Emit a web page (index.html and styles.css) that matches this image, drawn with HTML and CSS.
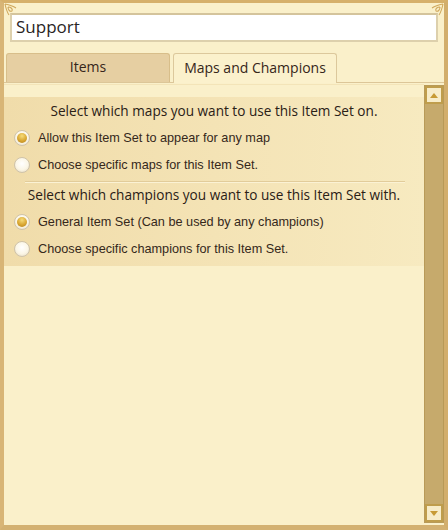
FILE: index.html
```html
<!DOCTYPE html>
<html>
<head>
<meta charset="utf-8">
<link rel="stylesheet" href="styles.css">
</head>
<body>
<div class="frame">
  <svg class="corner corner-tl" width="20" height="20" viewBox="0 0 20 20"><path d="M1 1 C6 2 9 3 12 5 M1 1 C2 6 3 9 5 12 M4 4 C7 4 9 6 8 8 M8 8 C6 9 4 7 4 4" fill="none" stroke="#d0a85c" stroke-width="1.1"/></svg>
  <svg class="corner corner-tr" width="20" height="20" viewBox="0 0 20 20"><path d="M19 1 C14 2 11 3 8 5 M19 1 C18 6 17 9 15 12 M16 4 C13 4 11 6 12 8 M12 8 C14 9 16 7 16 4" fill="none" stroke="#d0a85c" stroke-width="1.1"/></svg>
  <div class="search"><span class="search-text">Support</span></div>
  <div class="tabs">
    <div class="tab">Items</div>
    <div class="tab tab-active">Maps and Champions</div>
  </div>
  <div class="panel">
    <div class="content">
      <div class="band">
        <div class="heading">Select which maps you want to use this Item Set on.</div>
        <div class="option"><span class="radio radio-on"></span><span>Allow this Item Set to appear for any map</span></div>
        <div class="option"><span class="radio"></span><span>Choose specific maps for this Item Set.</span></div>
        <div class="sep"></div>
        <div class="heading">Select which champions you want to use this Item Set with.</div>
        <div class="option"><span class="radio radio-on"></span><span>General Item Set (Can be used by any champions)</span></div>
        <div class="option"><span class="radio"></span><span>Choose specific champions for this Item Set.</span></div>
      </div>
    </div>
    <div class="scrollbar">
      <div class="sb-btn"><svg width="8" height="5" viewBox="0 0 8 5"><path d="M4 0 L8 5 L0 5 Z" fill="#c79a34"/></svg></div>
      <div class="sb-track"></div>
      <div class="sb-btn"><svg width="8" height="5" viewBox="0 0 8 5"><path d="M0 0 L8 0 L4 5 Z" fill="#c79a34"/></svg></div>
    </div>
  </div>
</div>
</body>
</html>
```

FILE: styles.css
```css
* { box-sizing: border-box; }
html, body { margin: 0; padding: 0; }
body { width: 448px; height: 530px; overflow: hidden; background: #f9efc9; }

.frame {
  position: relative;
  width: 448px;
  height: 530px;
  background: #faf0ca;
  border-top: 3px solid #d6b06a;
  border-left: 4px solid #d8b576;
  border-right: 4px solid #d2ae6c;
  border-bottom: 5px solid #d3b171;
  display: flex;
  flex-direction: column;
}

.corner { position: absolute; top: 0; }
.corner-tl { left: 0; }
.corner-tr { right: 0; }

.search {
  margin: 10px 6px 0 6px;
  height: 29px;
  background: #ffffff;
  border: 2px solid #ddd0ac;
  border-top-color: #d4c49c;
  display: flex;
  align-items: center;
  padding-left: 4px;
  padding-bottom: 3px;
}
.search-text {
  font-family: "Open Sans", sans-serif;
  font-size: 17px;
  color: #2a251f;
  line-height: 1;
}

.tabs {
  margin-top: 11px;
  padding-left: 2px;
  display: flex;
  gap: 3px;
  align-items: flex-end;
  border-bottom: 1px solid #dcc698;
}
.tab {
  width: 164px;
  height: 29px;
  background: #e6cfa2;
  border: 1px solid #d8be8a;
  border-bottom: none;
  border-radius: 3px 3px 0 0;
  font-family: "Open Sans", sans-serif;
  font-size: 14px;
  color: #36261a;
  display: flex;
  align-items: center;
  justify-content: center;
  padding-bottom: 3px;
}
.tab-active {
  background: #fbf1cc;
  height: 30px;
  margin-bottom: -1px;
  border-color: #dcc89c;
}

.panel {
  flex: 1;
  display: flex;
  padding-top: 1px;
}
.content {
  flex: 1;
  padding-top: 12px;
  background: #faf0ca;
  border-top: 1px solid #f3e4b8;
}
.band {
  height: 169px;
  background: linear-gradient(90deg, #f0dcaa 0%, #f4e3b5 50%, #f7eac0 100%);
  padding-top: 4px;
}
.heading {
  font-family: "Open Sans", sans-serif;
  font-size: 13.6px;
  color: #2a2016;
  text-align: center;
  height: 20px;
  line-height: 20px;
}
.option {
  display: flex;
  align-items: center;
  height: 27px;
  padding-left: 10px;
  font-family: "Liberation Sans", Arial, sans-serif;
  font-size: 12.7px;
  color: #35281b;
}
.heading + .option { margin-top: 3px; }
.radio {
  width: 16px;
  height: 16px;
  border-radius: 50%;
  margin-right: 8px;
  background: radial-gradient(circle at 50% 40%, #ffffff 0%, #fbf6e6 55%, #e2d6bc 100%);
  border: 1px solid #cfc3aa;
  display: inline-flex;
  align-items: center;
  justify-content: center;
  flex: none;
}
.radio-on::after {
  content: "";
  width: 10px;
  height: 10px;
  border-radius: 50%;
  background: radial-gradient(circle at 50% 30%, #f6dc7a 0%, #d9a733 55%, #b3801c 100%);
}
.sep {
  height: 1px;
  margin: 3px 19px 3px 21px;
  background: #e2cc9a;
  box-shadow: 0 1px 0 #fbf2d4;
}

.scrollbar {
  width: 20px;
  margin-top: 1px;
  margin-bottom: 2px;
  background: #c6aa6c;
  border: 1px solid #b89a58;
  display: flex;
  flex-direction: column;
}
.sb-btn {
  height: 18px;
  background: #f7ecc8;
  border: 2px solid #bf9d4c;
  display: flex;
  align-items: center;
  justify-content: center;
}
.sb-track { flex: 1; }
```
